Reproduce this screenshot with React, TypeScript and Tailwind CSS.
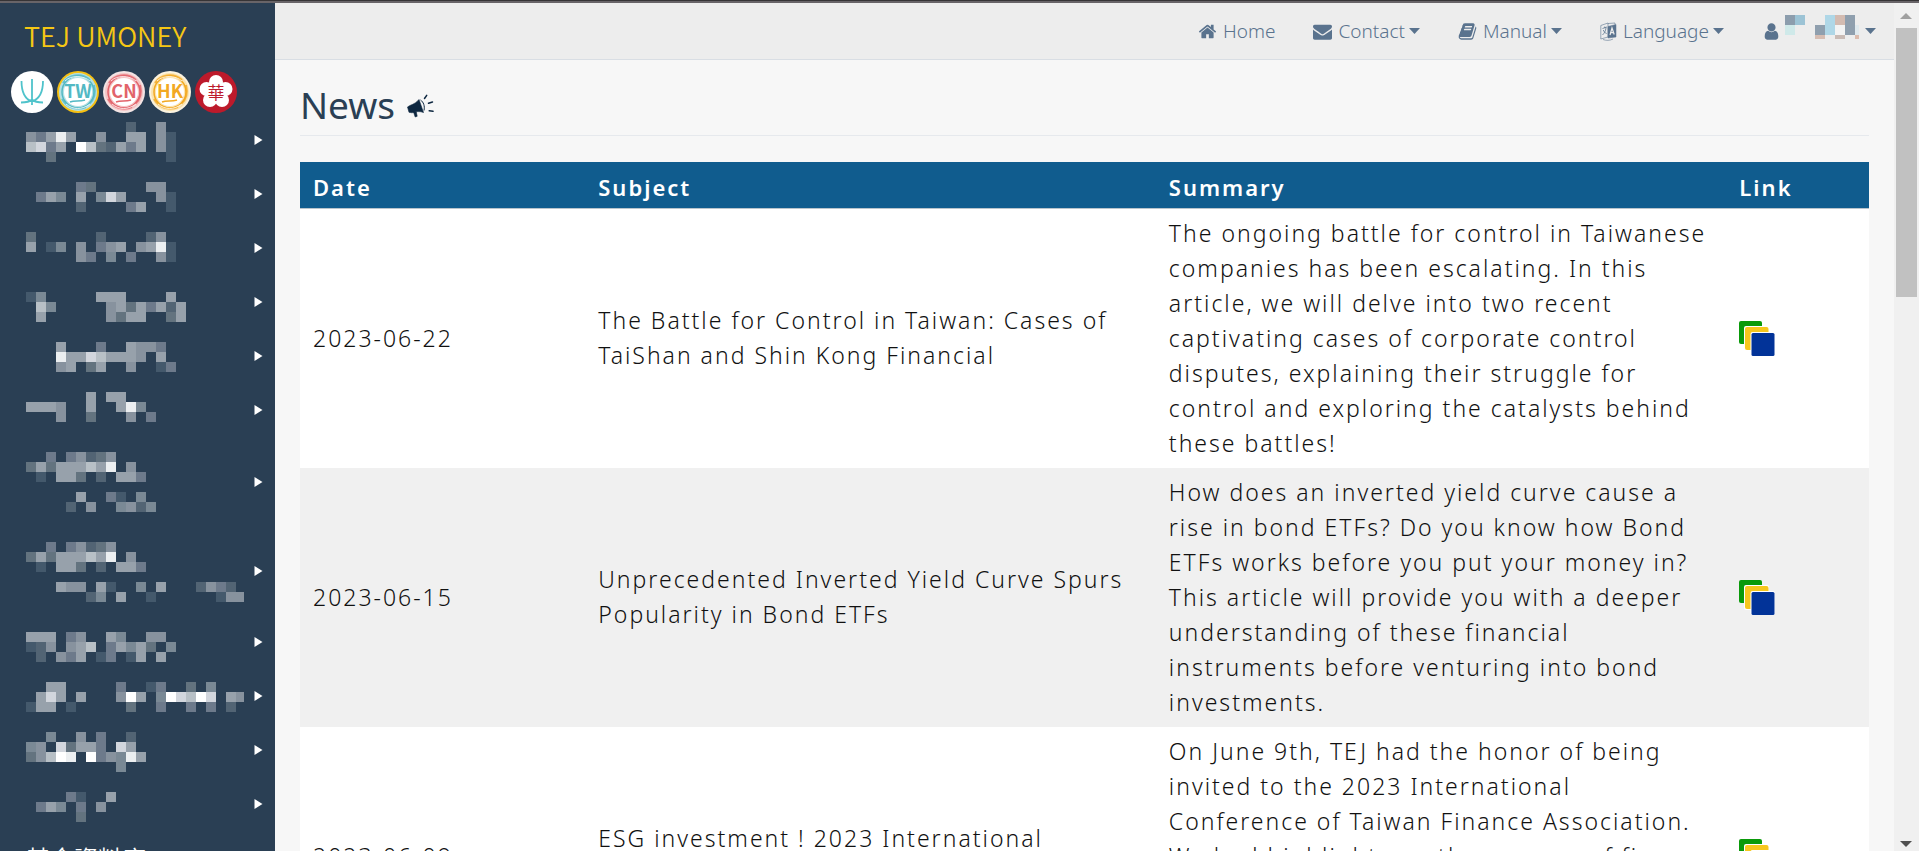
import React from "react";

const tones: Record<string, string> = {
  a: "#44596c",
  b: "#526474",
  c: "#63737f",
  d: "#6d7a8b",
  e: "#7a8995",
  f: "#87929e",
  g: "#97a1ab",
  h: "#b8c0c6",
  i: "#d2d6dd",
  j: "#eceff1",
  k: "#ffffff",
};

/* Each entry is a row of 10px tiles: [top offset inside the menu, tile tones]. */
const tileRows: [number, string][] = [
  [9, "..........b..f"],
  [19, "fdgjg..f..gg.fa"],
  [29, "hidg.khcbgdg.fa"],
  [39, "..c...........a"],
  [69, ".....dc.....ff"],
  [79, ".dge.g.eig...fa"],
  [89, ".....b....dg..a"],
  [119, "c......b....bf"],
  [129, "g.ae.f.dfg.fgja"],
  [139, ".....fd.e.d..fa"],
  [179, "ae.....ggg....g"],
  [189, ".he.....fgcgdgbg"],
  [199, ".g......fcgg..cg"],
  [229, "...g...d..gffd"],
  [239, "...jggihgggf.g"],
  [249, "...fg.cg..f..ad"],
  [279, "......g.gg"],
  [289, "gggf..g..gje"],
  [299, "...f..c...f.d"],
  [339, "..d.dfbcf"],
  [349, "cgcggghgj.f"],
  [359, ".a.ggc.b.ggd"],
  [379, ".....g..da.e"],
  [389, "....b.f..efbe"],
  [429, "..d.dfbcf"],
  [439, "cgcggghgj.f"],
  [449, ".a.ggc.b.ggd"],
  [469, "...gff.ga..e.g...bfdb"],
  [479, "......be.g..a......aff"],
  [519, "ggg.df..ge..ff"],
  [529, "abf.fgh.dgegc.e"],
  [539, ".b.fdg.ad.ag.g"],
  [569, "..gg.....d..ad..c.e"],
  [579, ".gig.g...fkg.ekihki.gf"],
  [589, "agg.a.....c..d..d.d.b"],
  [619, "..e..f.d..b"],
  [629, "ef.icggd.ig"],
  [639, "cfhkj.kdfejg"],
  [649, ".........e"],
  [679, "....da..g"],
  [689, ".dge.d.f"],
  [699, ".....c"],
];

const menuHeights = [
  "h-[54px]", "h-[54px]", "h-[54px]", "h-[54px]", "h-[54px]", "h-[54px]",
  "h-[89px]", "h-[89px]",
  "h-[54px]", "h-[54px]", "h-[54px]", "h-[54px]",
];

function Ring({ color, inner, rim }: { color: string; inner: string; rim: string }) {
  return (
    <>
      <circle cx="21" cy="21" r="21" fill={rim} />
      <circle cx="21" cy="21" r="19" fill={inner} />
      <circle cx="21" cy="21" r="16" fill="none" stroke={color} strokeWidth="1.5" />
      <path d="M6 12C11 4 24 1 33 9M5 28c5 8 14 12 24 8M37 14c2 8 1 14-5 19" fill="none" stroke={color} strokeWidth="2" opacity=".8" />
      <path d="M8 10C14 4 26 4 33 10M9 33c7 6 16 6 24 0" fill="none" stroke="#fff" strokeWidth="1" opacity=".8" />
      <circle cx="21" cy="21" r="14" fill="#fff" />
      <path d="M13 31c5-2 9 0 15-2" fill="none" stroke={color} strokeWidth="1.5" />
    </>
  );
}

function MarketBadge({ code, color, inner, rim }: { code: string; color: string; inner: string; rim: string }) {
  return (
    <a href="#market" aria-label={code} className="block size-[42px]">
      <svg viewBox="0 0 42 42" className="size-full">
        <Ring color={color} inner={inner} rim={rim} />
        <text x="21" y="27" textAnchor="middle" fontSize="18" fontWeight="700" fill={color} className="font-['Noto_Sans_CJK_TC',sans-serif]">
          {code}
        </text>
      </svg>
    </a>
  );
}

function Badges() {
  return (
    <div className="flex gap-1 pl-[11px]">
      <a href="#tej" aria-label="TEJ" className="block size-[42px]">
        <svg viewBox="0 0 42 42" className="size-full" fill="none" stroke="#4fc3cb" strokeWidth="1.8">
          <circle cx="21" cy="21" r="21" fill="#fff" stroke="none" />
          <path d="M21 8v26M10.5 10c0 10 3 18 10.5 20.5C28.5 28 32 20 32 10M10 31.500c5 0 8.500-.5 11-3 2.500 2.500 6 3 11 3" />
        </svg>
      </a>
      <MarketBadge code="TW" color="#53b9c4" inner="#b5e0e4" rim="#f6c012" />
      <MarketBadge code="CN" color="#e2636a" inner="#f6c4c5" rim="#f3e4e4" />
      <MarketBadge code="HK" color="#f2a922" inner="#fbe3ae" rim="#fbf3e0" />
      <a href="#greater-china" aria-label="Greater China" className="block size-[42px]">
        <svg viewBox="0 0 42 42" className="size-full">
          <circle cx="21" cy="21" r="21" fill="#bd1a2b" />
          <g fill="#fff">
            <circle cx="21" cy="11" r="7" />
            <circle cx="30.5" cy="18" r="7" />
            <circle cx="27" cy="29" r="7" />
            <circle cx="15" cy="29" r="7" />
            <circle cx="11.5" cy="18" r="7" />
            <circle cx="21" cy="21" r="9" />
          </g>
          <text x="21" y="28" textAnchor="middle" fontSize="17" fontWeight="400" fill="#bd1a2b" className="font-['Noto_Sans_CJK_TC',sans-serif]">
            華
          </text>
        </svg>
      </a>
    </div>
  );
}

function Sidebar() {
  return (
    <aside className="w-[275px] shrink-0 overflow-hidden bg-[#2a3f54]">
      <a href="#top" className="block h-[68px] pt-3 pl-6 text-[27px] leading-[42px] text-[#f6c714] font-['Noto_Sans_CJK_TC','Noto_Sans',sans-serif] font-[350]">
        TEJ UMONEY
      </a>
      <Badges />
      <nav className="relative">
        {menuHeights.map((h, i) => (
          <button key={i} type="button" aria-label={`Menu section ${i + 1}`} className={`flex w-full items-center justify-end pr-3 ${h}`}>
            <svg viewBox="0 0 9 10" className="h-2.5 w-[9px]" fill="#fff">
              <path d="M.5 0 8.500 5 .5 10z" />
            </svg>
          </button>
        ))}
        <button type="button" className="flex h-[54px] w-full items-center pl-[26px] text-[24px] text-white font-['Noto_Sans_CJK_TC',sans-serif] font-[350]">
          基金資料庫
        </button>
        <svg viewBox="0 0 218 709" className="pointer-events-none absolute top-0 left-[26px] h-[709px] w-[218px]" shapeRendering="crispEdges">
          {tileRows.map(([y, row]) =>
            row.split("").map((t, i) =>
              t === "." ? null : <rect key={`${y}-${i}`} x={i * 10} y={y} width="10" height="10" fill={tones[t]} />
            )
          )}
        </svg>
      </nav>
    </aside>
  );
}

const homePath =
  "M1472 992v480q0 26-19 45t-45 19h-384v-384h-256v384h-384q-26 0-45-19t-19-45v-480q0-1 .5-3t.5-3l575-474 575 474q1 2 1 6zm223-69l-62 74q-8 9-21 11h-3q-13 0-21-7l-692-577-692 577q-12 8-24 7-13-2-21-11l-62-74q-8-10-7-23.5t11-21.5l719-599q32-26 76-26t76 26l244 204v-195q0-14 9-23t23-9h192q14 0 23 9t9 23v408l219 182q10 8 11 21.5t-7 23.5z";
const mailPath =
  "M1792 710v794q0 66-47 113t-113 47h-1472q-66 0-113-47t-47-113v-794q44 49 101 87 362 246 497 345 57 42 92.5 65.5t94.5 48 110 24.5h2q51 0 110-24.5t94.5-48 92.5-65.5q170-123 498-345 57-39 100-87zm0-294q0 79-49 151t-122 123q-376 261-468 325-10 7-42.5 31t-54 38.5-52 32.5-57.5 27-50 9h-2q-23 0-50-9t-57.5-27-52-32.5-54-38.5-42.5-31q-91-64-262-182.5t-205-142.5q-62-42-117-115.5t-55-136.5q0-78 41.5-130t118.5-52h1472q65 0 112.5 47t47.5 113z";
const bookPath =
  "M1703 478q40 57 18 129l-275 906q-19 64-76.5 107.5t-122.5 43.5h-923q-77 0-148.5-53.5t-99.5-131.5q-24-67-2-127 0-4 3-27t4-37q1-8-3-21.5t-3-19.5q2-11 8-21t16.5-23.5 16.5-23.5q23-38 45-91.5t30-91.5q3-10 .5-30t-.5-28q3-11 17-28t17-23q21-36 42-92t25-90q1-9-2.5-32t.5-28q4-13 22-30.5t22-22.5q19-26 42.5-84.5t27.5-96.5q1-8-3-25.5t-2-26.5q2-8 9-18t18-23 17-21q8-12 16.5-30.5t15-35 16-36 19.5-32 26.5-23.5 36-11.5 47.5 5.5l-1 3q38-9 51-9h761q74 0 114 56t18 130l-274 906q-36 119-71.5 153.5t-128.5 34.5h-869q-27 0-38 15-11 16-1 43 24 70 144 70h923q29 0 56-15.5t35-41.5l300-987q7-22 5-57 38 15 59 43zm-1064 2q-4 13 2 22.5t20 9.5h608q13 0 25.5-9.5t16.5-22.5l21-64q4-13-2-22.5t-20-9.5h-608q-13 0-25.5 9.5t-16.5 22.5zm-83 256q-4 13 2 22.5t20 9.5h608q13 0 25.5-9.5t16.5-22.5l21-64q4-13-2-22.5t-20-9.5h-608q-13 0-25.5 9.5t-16.5 22.5z";
const userPath =
  "M1536 1399q0 109-62.5 187t-150.5 78h-854q-88 0-150.5-78t-62.5-187q0-85 8.5-160.5t31.5-152 58.5-131 94-89 134.5-34.5q131 128 313 128t313-128q76 0 134.5 34.5t94 89 58.5 131 31.5 152 8.5 160.5zm-256-887q0 159-112.5 271.5t-271.5 112.5-271.5-112.5-112.5-271.5 112.5-271.5 271.5-112.5 271.5 112.5 112.5 271.5z";

function Glyph({ d }: { d: string }) {
  return (
    <svg viewBox="0 0 1792 1792" className="size-[19px] shrink-0 fill-current">
      <path d={d} />
    </svg>
  );
}

function Caret() {
  return (
    <svg viewBox="0 0 11 6" className="h-1.5 w-[11px] shrink-0 fill-current">
      <path d="M0 0h11L5.500 6z" />
    </svg>
  );
}

function LanguageIcon() {
  return (
    <svg viewBox="0 0 17 19" className="h-[19px] w-[17px] shrink-0" fill="none" stroke="currentColor">
      <path d="M.8 3.500 8 1v14L.8 17z" strokeWidth=".6" />
      <path d="M2.500 6.500 7 5M4.800 4.500v1.500M6 6c-.5 3-1.500 5-3.500 7M3.200 8c1 2 2 3 3.500 3.500" strokeWidth=".8" />
      <path d="M8 4.500 16 2.500V15L8 16z" fill="currentColor" strokeWidth=".5" />
      <path d="M8 1.500 15 1v1.500M3 17.500c3 1.200 7 1.200 10-.5" strokeWidth=".6" />
      <path d="m10 13 2-7 2.200 6.500M10.700 10.700l3-.4" stroke="#ededed" strokeWidth="1.200" />
    </svg>
  );
}

const nameTiles: [number, number, number, number, string][] = [
  [0, 0, 10, 10, "#8c9dad"],
  [10, 0, 10, 10, "#9cc3d5"],
  [0, 10, 10, 10, "#cfe9e9"],
  [30, 10, 10, 10, "#8f9fae"],
  [30, 20, 10, 4, "#d6bdb2"],
  [40, 0, 10, 20, "#afd7e7"],
  [50, 0, 10, 10, "#d3bbb1"],
  [50, 10, 10, 10, "#f3f3f3"],
  [50, 20, 10, 4, "#c9bbb5"],
  [60, 0, 10, 20, "#8f9fae"],
  [70, 10, 4, 10, "#dfe9ee"],
  [70, 20, 4, 4, "#dcbcae"],
];

function MenuButton({ icon, label }: { icon: React.ReactNode; label: string }) {
  return (
    <button type="button" className="flex items-center gap-1">
      <span className="flex items-center gap-1.5">
        {icon}
        {label}
      </span>
      <Caret />
    </button>
  );
}

function TopBar() {
  return (
    <header className="flex h-[57px] items-center justify-end border-b border-[#d9dee4] bg-[#ededed] pr-[18px] text-[19px] font-light text-[#5a738e]">
      <nav className="flex items-center gap-[38px]">
        <a href="#home" className="flex items-center gap-1.5">
          <Glyph d={homePath} />
          Home
        </a>
        <MenuButton icon={<Glyph d={mailPath} />} label="Contact" />
        <MenuButton icon={<Glyph d={bookPath} />} label="Manual" />
        <MenuButton icon={<LanguageIcon />} label="Language" />
        <button type="button" aria-label="Account" className="flex items-center gap-1">
          <Glyph d={userPath} />
          <svg viewBox="0 0 76 32" className="h-8 w-[76px] shrink-0" shapeRendering="crispEdges">
            {nameTiles.map(([x, y, w, h, c], i) => (
              <rect key={i} x={x} y={y} width={w} height={h} fill={c} />
            ))}
          </svg>
          <Caret />
        </button>
      </nav>
    </header>
  );
}

function Megaphone() {
  return (
    <svg viewBox="0 0 27 25" className="h-[25px] w-[27px]" fill="#0d2740" stroke="#0d2740">
      <path d="M.5 13 3 11.500C7 10 10 8 12 5.500L16.500 18.500C13 17 9 17.500 5 18.800L2 18.300z" strokeWidth=".6" strokeLinejoin="round" />
      <path d="m6.500 18 1.700 5 2-.7-1-4.800z" strokeWidth=".6" />
      <path d="M13.500 6c3 2 4.500 6 3.500 10.500" fill="none" strokeWidth="1" />
      <path d="m17.500 4.500 2.200-3.200M21.500 9.200l4-1.200M22.200 16.800l3.800.5" fill="none" strokeWidth="1.500" strokeLinecap="round" />
    </svg>
  );
}

function WindowsIcon() {
  return (
    <svg viewBox="0 0 36 35" className="h-[35px] w-9">
      <rect x="0" y="0" width="23" height="23" rx="2" fill="#0a9a0a" />
      <rect x="5" y="5" width="25" height="25" rx="2" fill="#fff" />
      <rect x="6" y="6" width="23.5" height="23" rx="2" fill="#f6c71e" />
      <rect x="11.5" y="11" width="24.5" height="24" rx="2" fill="#fff" />
      <rect x="12.5" y="12" width="23" height="23" rx="1.5" fill="#023398" />
    </svg>
  );
}

const news = [
  {
    date: "2023-06-22",
    subject: "The Battle for Control in Taiwan: Cases of TaiShan and Shin Kong Financial",
    summary:
      "The ongoing battle for control in Taiwanese companies has been escalating. In this article, we will delve into two recent captivating cases of corporate control disputes, explaining their struggle for control and exploring the catalysts behind these battles!",
  },
  {
    date: "2023-06-15",
    subject: "Unprecedented Inverted Yield Curve Spurs Popularity in Bond ETFs",
    summary:
      "How does an inverted yield curve cause a rise in bond ETFs? Do you know how Bond ETFs works before you put your money in? This article will provide you with a deeper understanding of these financial instruments before venturing into bond investments.",
  },
  {
    date: "2023-06-09",
    subject: "ESG investment ! 2023 International Conference of Taiwan Finance",
    summary:
      "On June 9th, TEJ had the honor of being invited to the 2023 International Conference of Taiwan Finance Association. We had highlights on the success of firms in ESG investment and shared how our databases help scholars carry out their research.",
  },
];

function NewsTable() {
  return (
    <table className="w-full table-fixed border-collapse bg-white text-left text-[23px] leading-[35px] tracking-[2px] text-[#111111]">
      <colgroup>
        <col className="w-2/11" />
        <col className="w-4/11" />
        <col className="w-4/11" />
        <col className="w-1/11" />
      </colgroup>
      <thead>
        <tr className="h-[46px] border-b border-[#b9c4cc] bg-[#105c8e] text-[22px] font-semibold text-white">
          {["Date", "Subject", "Summary", "Link"].map((h) => (
            <th key={h} scope="col" className="px-[13px] pt-2 pb-0.5 font-semibold">{h}</th>
          ))}
        </tr>
      </thead>
      <tbody className="font-light">
        {news.map((n) => (
          <tr key={n.date} className="even:bg-[#f0f0f0]">
            <td className="px-[13px] py-[7px]">{n.date}</td>
            <td className="px-[13px] py-[7px]">{n.subject}</td>
            <td className="px-[13px] py-[7px]">{n.summary}</td>
            <td className="px-[13px] py-[7px]">
              <a href="#article" aria-label="Open article" className="flex"><WindowsIcon /></a>
            </td>
          </tr>
        ))}
      </tbody>
    </table>
  );
}

function ScrollTrack() {
  return (
    <div aria-hidden="true" className="flex w-[25px] shrink-0 flex-col items-center bg-[#f0f0f0]">
      <svg viewBox="0 0 25 25" className="size-[25px] shrink-0" fill="#a0a0a0"><path d="M6 16h12l-6-6z" /></svg>
      <div className="h-[269px] w-[21px] bg-[#c1c1c1]" />
      <svg viewBox="0 0 25 25" className="mt-auto size-[25px] shrink-0" fill="#505050"><path d="M6 15h12l-6 6z" /></svg>
    </div>
  );
}

export default function App() {
  return (
    <div className="flex h-screen flex-col overflow-hidden border-t border-[#363436] bg-[#f7f7f7] font-['Noto_Sans','Noto_Sans_CJK_TC',sans-serif]">
      <div className="h-0.5 shrink-0 bg-[#686468]" />
      <div className="flex min-h-0 flex-1">
        <Sidebar />
        <div className="min-w-0 flex-1 overflow-hidden">
          <TopBar />
          <main className="px-[25px]">
            <div className="flex h-[76px] items-center gap-3 border-b border-[#e6e9ed] pt-3.5">
              <h1 className="text-[37px] leading-[50px] text-[#2a3f54]">News</h1>
              <div className="pt-1">
                <Megaphone />
              </div>
            </div>
            <div className="pt-[26px]">
              <NewsTable />
            </div>
          </main>
        </div>
        <ScrollTrack />
      </div>
    </div>
  );
}
